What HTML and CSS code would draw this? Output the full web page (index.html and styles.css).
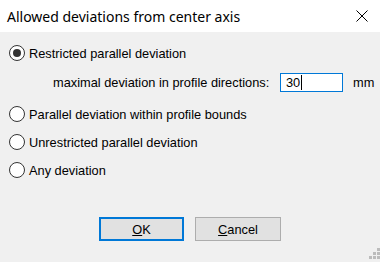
FILE: index.html
```html
<!DOCTYPE html>
<html lang="en">
<head>
    <meta charset="UTF-8">
    <meta name="viewport" content="width=device-width, initial-scale=1.0">
    <title>Allowed deviations from center axis</title>
    <link rel="stylesheet" href="styles.css">
</head>
<body>
    <div class="dialog">
        <div class="titlebar">
            <span class="title">Allowed deviations from center axis</span>
            <svg class="close" width="12" height="12" viewBox="0 0 12 12">
                <path d="M0.5 0.5 L11.5 11.5 M11.5 0.5 L0.5 11.5" stroke="#000" stroke-width="1" fill="none"/>
            </svg>
        </div>
        <div class="content">
            <label class="radio first">
                <svg width="16" height="16" viewBox="0 0 16 16">
                    <circle cx="8" cy="8" r="7.5" fill="#fff" stroke="#333"/>
                    <circle cx="8" cy="8" r="4" fill="#333"/>
                </svg>
                <span>Restricted parallel deviation</span>
            </label>
            <div class="option-row">
                <span class="field-label">maximal deviation in profile directions:</span>
                <div class="input">30<span class="caret"></span></div>
                <span class="unit">mm</span>
            </div>
            <label class="radio second">
                <svg width="16" height="16" viewBox="0 0 16 16">
                    <circle cx="8" cy="8" r="7.5" fill="#fff" stroke="#333"/>
                </svg>
                <span>Parallel deviation within profile bounds</span>
            </label>
            <label class="radio">
                <svg width="16" height="16" viewBox="0 0 16 16">
                    <circle cx="8" cy="8" r="7.5" fill="#fff" stroke="#333"/>
                </svg>
                <span>Unrestricted parallel deviation</span>
            </label>
            <label class="radio">
                <svg width="16" height="16" viewBox="0 0 16 16">
                    <circle cx="8" cy="8" r="7.5" fill="#fff" stroke="#333"/>
                </svg>
                <span>Any deviation</span>
            </label>
            <div class="buttons">
                <div class="btn default"><u>O</u>K</div>
                <div class="btn"><u>C</u>ancel</div>
            </div>
        </div>
        <svg class="grip" width="11" height="11" viewBox="0 0 11 11">
            <rect x="8" y="0" width="3" height="3" fill="#bcbcbc"/>
            <rect x="4" y="4" width="3" height="3" fill="#bcbcbc"/>
            <rect x="8" y="4" width="3" height="3" fill="#bcbcbc"/>
            <rect x="0" y="8" width="3" height="3" fill="#bcbcbc"/>
            <rect x="4" y="8" width="3" height="3" fill="#bcbcbc"/>
            <rect x="8" y="8" width="3" height="3" fill="#bcbcbc"/>
        </svg>
    </div>
</body>
</html>
```

FILE: styles.css
```css
body {
    margin: 0;
    font-family: "Liberation Sans", Arial, sans-serif;
    font-size: 12.8px;
    color: #000;
}
.dialog {
    position: relative;
    width: 380px;
    height: 262px;
    background: #f0f0f0;
    overflow: hidden;
}
.titlebar {
    height: 32px;
    background: #fff;
    display: flex;
    align-items: center;
    justify-content: space-between;
    padding: 0 12px 0 7px;
}
.title {
    font-family: "Noto Sans", sans-serif;
    font-size: 14px;
    color: #000;
}
.content {
    display: flex;
    flex-direction: column;
}
.radio {
    display: flex;
    align-items: center;
    height: 20px;
    margin: 8px 0 0 9px;
    gap: 4px;
}
.radio.first {
    margin-top: 11px;
}
.radio.second {
    margin-top: 12px;
}
.option-row {
    display: flex;
    align-items: center;
    height: 19px;
    margin: 10px 0 0 53px;
}
.field-label {
    width: 227px;
    white-space: nowrap;
}
.input {
    box-sizing: border-box;
    width: 63px;
    height: 19px;
    border: 1px solid #0078d7;
    background: #fff;
    padding-left: 5px;
    display: flex;
    align-items: center;
}
.caret {
    display: inline-block;
    width: 1px;
    height: 15px;
    background: #000;
    margin-left: 1px;
}
.unit {
    margin-left: 10px;
}
.buttons {
    display: flex;
    gap: 11px;
    margin: 37px 0 0 99px;
}
.btn {
    box-sizing: border-box;
    width: 86px;
    height: 24px;
    border: 1px solid #adadad;
    background: #e1e1e1;
    display: flex;
    align-items: center;
    justify-content: center;
}
.btn.default {
    width: 85px;
    border: 2px solid #0078d7;
}
.grip {
    position: absolute;
    right: 0;
    bottom: 3px;
}
```
